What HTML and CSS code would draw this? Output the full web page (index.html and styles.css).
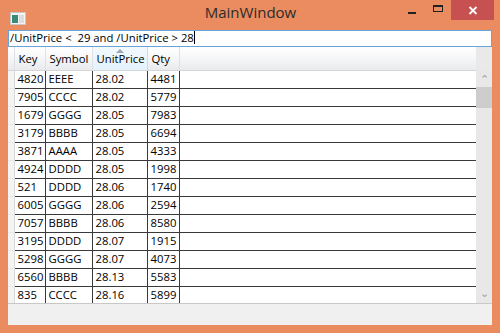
FILE: index.html
```html
<!DOCTYPE html>
<html lang="en">
<head>
    <meta charset="UTF-8">
    <title>MainWindow</title>
    <link rel="stylesheet" href="styles.css">
</head>
<body>
    <div class="window">
        <div class="titlebar">
            <div class="app-icon">
                <svg width="16" height="13" viewBox="0 0 16 13">
                    <rect x="0.5" y="0.5" width="15" height="12" fill="#f4f4f4" stroke="#c8c8c8"/>
                    <rect x="2" y="3" width="6" height="8" fill="#3a8a7a"/>
                    <rect x="9" y="3" width="5" height="8" fill="#dcdcdc"/>
                </svg>
            </div>
            <div class="title">MainWindow</div>
            <div class="controls">
                <div class="ctl min"><span></span></div>
                <div class="ctl max"><span></span></div>
                <div class="ctl close">
                    <svg width="10" height="9" viewBox="0 0 10 9">
                        <path d="M1.5 1 L8.5 8 M8.5 1 L1.5 8" stroke="#fff" stroke-width="1.8"/>
                    </svg>
                </div>
            </div>
        </div>
        <div class="client">
            <div class="query">/UnitPrice &lt;&nbsp; 29 and /UnitPrice &gt; 28<span class="caret"></span></div>
            <div class="grid">
                <div class="grid-body">
                    <table class="data">
                        <thead>
                            <tr>
                                <th class="rh"></th>
                                <th class="c-key">Key</th>
                                <th class="c-sym">Symbol</th>
                                <th class="c-price sorted">UnitPrice<span class="sort"></span></th>
                                <th class="c-qty">Qty</th>
                                <th class="fill"></th>
                            </tr>
                        </thead>
                        <tbody id="rows"></tbody>
                    </table>
                </div>
                <div class="vscroll">
                    <div class="sb-head"></div>
                    <div class="arrow">&#8963;</div>
                    <div class="thumb"></div>
                    <div class="track"></div>
                    <div class="arrow down">&#8964;</div>
                </div>
            </div>
            <div class="footer"></div>
        </div>
    </div>
    <script>
        const data = [
            [4820, "EEEE", "28.02", 4481],
            [7905, "CCCC", "28.02", 5779],
            [1679, "GGGG", "28.05", 7983],
            [3179, "BBBB", "28.05", 6694],
            [3871, "AAAA", "28.05", 4333],
            [4924, "DDDD", "28.05", 1998],
            [521, "DDDD", "28.06", 1740],
            [6005, "GGGG", "28.06", 2594],
            [7057, "BBBB", "28.06", 8580],
            [3195, "DDDD", "28.07", 1915],
            [5298, "GGGG", "28.07", 4073],
            [6560, "BBBB", "28.13", 5583],
            [835, "CCCC", "28.16", 5899],
        ];
        const rows = document.getElementById("rows");
        data.forEach(r => {
            const tr = document.createElement("tr");
            tr.innerHTML = `<td class="rh"></td><td>${r[0]}</td><td>${r[1]}</td><td>${r[2]}</td><td>${r[3]}</td><td class="fill"></td>`;
            rows.appendChild(tr);
        });
    </script>
</body>
</html>
```

FILE: styles.css
```css
*{
    margin: 0;
    padding: 0;
    box-sizing: border-box;
}
body{
    width: 500px;
    height: 333px;
    overflow: hidden;
    font-family: "Open Sans", "Noto Sans", sans-serif;
}
.window{
    width: 500px;
    height: 333px;
    background-color: #ea8c5f;
    padding: 0 8px 8px 8px;
    display: flex;
    flex-direction: column;
}
.titlebar{
    height: 30px;
    display: flex;
    align-items: flex-start;
}
.app-icon{
    margin-top: 8px;
    margin-left: 2px;
    height: 13px;
}
.title{
    flex: 1;
    text-align: center;
    font-size: 15px;
    line-height: 25px;
    color: #2b2b2b;
    padding-left: 76px;
}
.controls{
    display: flex;
    margin-right: -2px;
}
.ctl{
    height: 20px;
    display: flex;
    align-items: center;
    justify-content: center;
}
.min{
    width: 26px;
}
.min span{
    display: block;
    width: 8px;
    height: 2px;
    background: #222;
    margin-top: 6px;
}
.max{
    width: 26px;
}
.max span{
    display: block;
    width: 10px;
    height: 7px;
    border: 1px solid #222;
    border-top-width: 2px;
    margin-top: -3px;
}
.close{
    width: 43px;
    background-color: #c75050;
}
.client{
    flex: 1;
    background-color: #f0f0f0;
    display: flex;
    flex-direction: column;
}
.query{
    height: 17px;
    background: #fff;
    border: 1px solid #6aa3d8;
    font-size: 11.3px;
    line-height: 14px;
    padding-left: 1px;
    color: #000;
    white-space: pre;
}
.caret{
    display: inline-block;
    width: 1px;
    height: 13px;
    background: #000;
    vertical-align: -2px;
}
.grid{
    height: 257px;
    display: flex;
    background: #fff;
    border-bottom: 1px solid #c8c8c8;
}
.grid-body{
    flex: 1;
    overflow: hidden;
}
.data{
    border-collapse: collapse;
    table-layout: fixed;
    width: 468px;
    font-size: 11.3px;
    color: #000;
}
.data th{
    height: 23px;
    font-weight: normal;
    text-align: left;
    padding: 0 4px;
    background: linear-gradient(#ffffff, #f3f4f6 60%, #e9eaec);
    border-right: 1px solid #dfe1e4;
    border-bottom: 1px solid #d5d5d5;
    position: relative;
}
.data th.sorted{
    background: linear-gradient(#f2f9fd, #e3f2fb);
    border-right-color: #c2ddf0;
}
.sort{
    position: absolute;
    top: 2px;
    left: 50%;
    margin-left: -4px;
    width: 0;
    height: 0;
    border-left: 4px solid transparent;
    border-right: 4px solid transparent;
    border-bottom: 4px solid #9aa6b2;
}
.data td{
    height: 18px;
    padding: 0 2px 0 3px;
    line-height: 16px;
    border-right: 1px solid #3a3a3a;
    border-bottom: 1px solid #3a3a3a;
    white-space: nowrap;
}
.data .rh{
    width: 6px;
    padding: 0;
}
.data td.rh{
    background: #f4f4f4;
    border-right: 1px solid #d8d8d8;
    border-bottom: 1px solid #e8e8e8;
}
.c-key{ width: 31px; }
.c-sym{ width: 47px; }
.c-price{ width: 55px; }
.c-qty{ width: 32px; }
.data .fill{
    border-right: none;
}
.vscroll{
    width: 16px;
    background: #e8e8e8;
    display: flex;
    flex-direction: column;
    align-items: center;
}
.sb-head{
    height: 23px;
    width: 16px;
    background: #e9e9e9;
}
.arrow{
    height: 17px;
    font-size: 11px;
    line-height: 17px;
    color: #a0a0a0;
}
.arrow.down{
    line-height: 14px;
}
.thumb{
    width: 16px;
    height: 21px;
    background: #cdcdcd;
}
.track{
    flex: 1;
}
.footer{
    flex: 1;
}
```
